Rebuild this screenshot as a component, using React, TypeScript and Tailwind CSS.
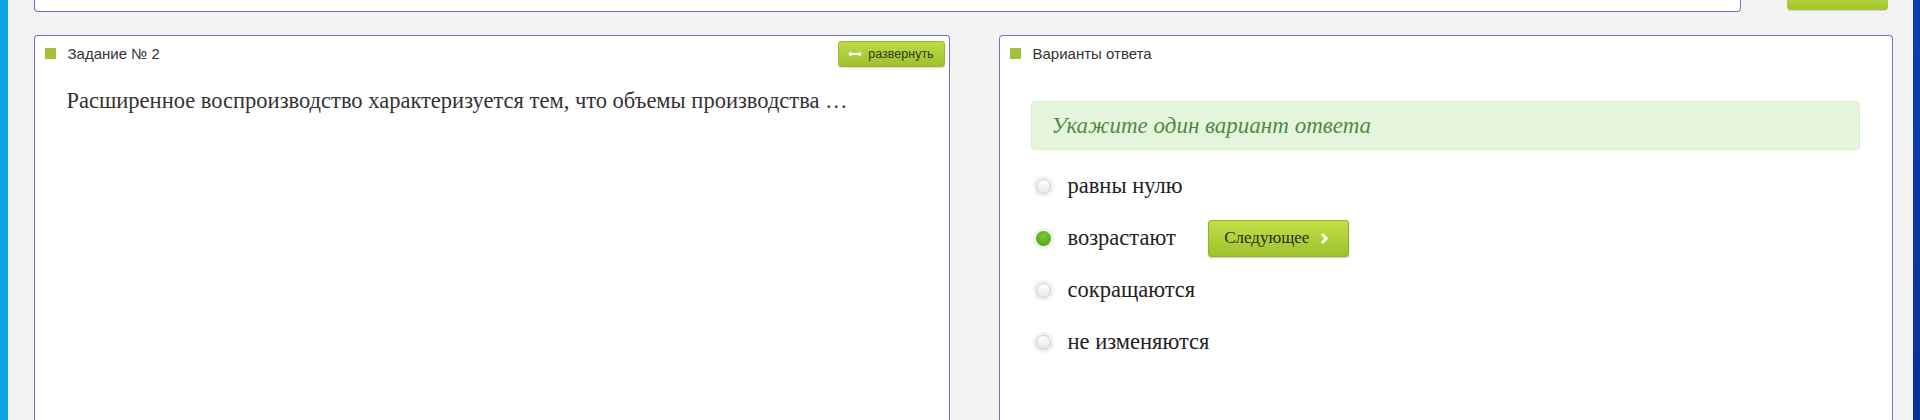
import { ChevronRight } from 'lucide-react'

const options = ['равны нулю', 'возрастают', 'сокращаются', 'не изменяются']

function Radio({ checked }: { checked?: boolean }) {
  return (
    <span className="flex h-[19px] w-[19px] items-center justify-center rounded-full bg-[#f1f1f1] shadow-[0_0_1px_1px_rgba(0,0,0,0.06)]">
      {checked ? (
        <span className="h-[15px] w-[15px] rounded-full bg-[radial-gradient(circle_at_50%_35%,#7ccc2c,#4a9e12)]" />
      ) : (
        <span className="h-[15px] w-[15px] rounded-full border border-[#cfcfcf] bg-[linear-gradient(#ffffff,#e6e6e6)]" />
      )}
    </span>
  )
}

function PanelHeader({ title }: { title: string }) {
  return (
    <div className="flex items-center gap-[12px]">
      <span className="-mt-[2px] h-[11px] w-[11px] bg-[#a4c03a]" />
      <span className="font-['Liberation_Sans',sans-serif] text-[15px] text-[#333]">{title}</span>
    </div>
  )
}

export default function App() {
  return (
    <div className="flex h-[420px] w-[1920px] overflow-hidden bg-[#f3f3f3]">
      <div className="w-[8px] bg-[#0ea3e8]" />

      <div className="flex flex-1 flex-col pl-[26px] pr-[20px]">
        {/* top bar */}
        <div className="flex items-start">
          <div className="h-[12px] w-[1707px] rounded-b-[4px] border border-t-0 border-[#7272c9] bg-white" />
          <div className="ml-[46px] h-[10px] w-[101px] rounded-b-[4px] bg-[linear-gradient(#b2d13a,#a2c22e)] shadow-[0_1px_1px_rgba(0,0,0,0.15)]" />
        </div>

        <div className="mt-[23px] flex gap-[49px]">
          {/* task panel */}
          <div className="h-[400px] w-[916px] rounded-t-[4px] border border-b-0 border-[#7272c9] bg-white">
            <div className="flex items-center justify-between pl-[10px] pr-[4px] pt-[5px]">
              <PanelHeader title="Задание № 2" />
              <button className="flex h-[26px] w-[107px] items-center justify-center gap-[6px] rounded-[3px] border border-[#9bb82c] bg-[linear-gradient(#bddb46,#a0c030)] font-['Liberation_Sans',sans-serif] text-[12.5px] text-[#2f3a16] shadow-[0_1px_1px_rgba(0,0,0,0.15)]">
                <svg width="14" height="6" viewBox="0 0 14 6" fill="white">
                  <path d="M0 3 L3.5 0 V2 H10.5 V0 L14 3 L10.5 6 V4 H3.5 V6 Z" />
                </svg>
                развернуть
              </button>
            </div>
            <p className="mt-[20px] pl-[32px] font-['Liberation_Serif',serif] text-[22.5px] leading-[28px] text-[#333]">
              Расширенное воспроизводство характеризуется тем, что объемы производства …
            </p>
          </div>

          {/* answers panel */}
          <div className="h-[400px] w-[894px] rounded-t-[4px] border border-b-0 border-[#7272c9] bg-white">
            <div className="flex h-[31px] items-center pl-[10px] pt-[5px]">
              <PanelHeader title="Варианты ответа" />
            </div>
            <div className="ml-[31px] mr-[32px] mt-[34px] flex h-[49px] items-center rounded-[4px] border border-[#d9efcd] bg-[#e5f6dd] pl-[20px] pt-[2px]">
              <span className="font-['Liberation_Serif',serif] text-[23px] italic text-[#4f8a45]">Укажите один вариант ответа</span>
            </div>
            <div className="ml-[34px] mt-[10px] flex flex-col">
              {options.map((o, i) => (
                <label key={o} className="flex h-[52px] items-center">
                  <Radio checked={i === 1} />
                  <span className="ml-[15px] font-['Liberation_Serif',serif] text-[22.5px] text-[#222]">{o}</span>
                  {i === 1 && (
                    <button className="ml-[32px] flex h-[37px] w-[141px] items-center justify-center gap-[8px] rounded-[3px] border border-[#93b42a] bg-[linear-gradient(#c2df45,#9fc12e)] font-['Liberation_Serif',serif] text-[17px] text-[#2b2b1a] shadow-[0_1px_2px_rgba(0,0,0,0.2)]">
                      Следующее
                      <ChevronRight size={15} strokeWidth={4.5} color="white" />
                    </button>
                  )}
                </label>
              ))}
            </div>
          </div>
        </div>
      </div>

      <div className="w-[8px] bg-[linear-gradient(#0b3fb3,#0a2f98)]" />
    </div>
  )
}
